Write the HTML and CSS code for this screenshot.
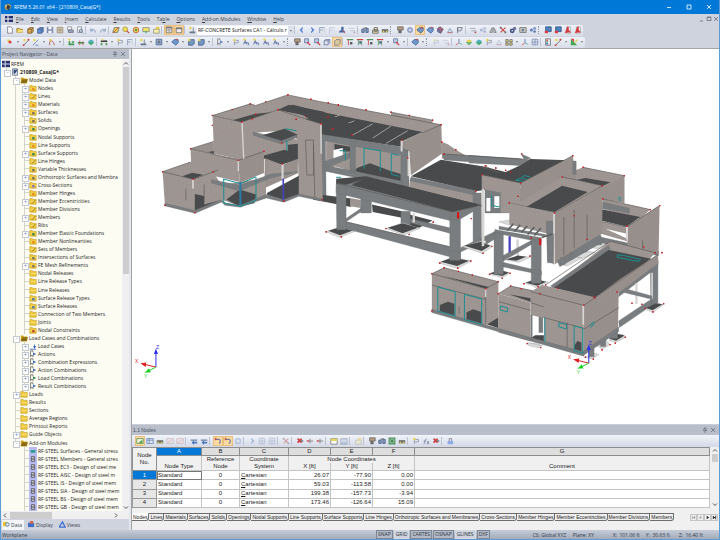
FILE: index.html
```html
<!DOCTYPE html>
<html lang="en">
<head>
<meta charset="utf-8">
<title>RFEM 5.26.01 x64 - [210809_CasaJG*]</title>
<link rel="stylesheet" href="styles.css">
</head>
<body>
<div class="app">
  <header class="titlebar">
    <svg class="logo" viewBox="0 0 10 10"><path fill="#d9a441" d="M1 3l4-2 4 2-1 4-4 2-3-2z"/><path fill="#333b4a" d="M4 2l4 2-2 5-3-2z"/><path fill="#e9eef5" d="M1 2l3 1-1 1z"/></svg>
    <h1>RFEM 5.26.01 x64 - [210809_CasaJG*]</h1>
    <div class="winbtns">
      <button aria-label="Minimize"><svg viewBox="0 0 6 6"><path d="M1 3.500h4"/></svg></button>
      <button aria-label="Maximize"><svg viewBox="0 0 6 6"><path d="M1 1h4v4h-4z"/></svg></button>
      <button aria-label="Close"><svg viewBox="0 0 6 6"><path d="M1 1l4 4M5 1l-4 4"/></svg></button>
    </div>
  </header>
  <nav class="menubar">
    <svg class="flag" viewBox="0 0 8 6"><path fill="#26316e" d="M0 0h8v6H0z"/><path stroke="#fff" d="M0 3h8M3 0v6"/></svg>
    <a href="#"><u>F</u>ile</a><a href="#"><u>E</u>dit</a><a href="#"><u>V</u>iew</a><a href="#"><u>I</u>nsert</a><a href="#"><u>C</u>alculate</a><a href="#"><u>R</u>esults</a><a href="#"><u>T</u>ools</a><a href="#">Ta<u>b</u>le</a><a href="#"><u>O</u>ptions</a><a href="#"><u>A</u>dd-on Modules</a><a href="#"><u>W</u>indow</a><a href="#"><u>H</u>elp</a>
    <div class="mdibtns">
      <button aria-label="Minimize view"><svg viewBox="0 0 6 6"><path d="M1 5h3"/></svg></button>
      <button aria-label="Restore view"><svg viewBox="0 0 6 6"><path d="M1 1.500h4v3h-4zM1 1h4"/></svg></button>
      <button aria-label="Close view"><svg viewBox="0 0 6 6"><path d="M1 1l4 4M5 1l-4 4"/></svg></button>
    </div>
  </nav>
  <div class="toolbars">
    <div class="toolbar" id="bar-main"></div>
    <div class="toolbar" id="bar-model"></div>
  </div>

  <div class="body">
    <aside class="navigator">
      <div class="paneltitle"><h2>Project Navigator - Data</h2><button class="pin" aria-label="Pin navigator"><svg viewBox="0 0 6 6"><path d="M2 1h2v2.500M1 3.500h4M3 4v2M2 1v2"/></svg></button><button aria-label="Close navigator"><svg viewBox="0 0 6 6"><path d="M1 1l4 4M5 1l-4 4"/></svg></button></div>
      <div class="treebox">
        <ul class="tree" id="tree"></ul>
        <div class="vscroll"><svg viewBox="0 0 6 6"><path d="M1 4l2-2 2 2"/></svg><div class="thumb"></div><svg viewBox="0 0 6 6"><path d="M1 2l2 2 2-2"/></svg></div>
      </div>
      <div class="hscroll"><svg viewBox="0 0 6 6"><path d="M4 1l-2 2 2 2"/></svg><div class="thumb"></div><svg viewBox="0 0 6 6"><path d="M2 1l2 2-2 2"/></svg></div>
      <div class="navtabs">
        <button class="on"><svg viewBox="0 0 8 8"><path fill="#f1c232" d="M0 1h5v5H0z"/><circle cx="5" cy="4" r="2" fill="#e4f1fb" stroke="#4c78a8"/></svg>Data</button>
        <button><svg viewBox="0 0 8 8"><path fill="#3f6fc4" d="M0 2h7v5H0z"/><path fill="#d9694d" d="M2 0h4v3H2z"/></svg>Display</button>
        <button><svg viewBox="0 0 8 8"><path fill="none" stroke="#3f6fd0" stroke-width="1.500" d="M0 7L4 1l3 6z"/></svg>Views</button>
      </div>
    </aside>

    <main class="work">
      <svg class="view" viewBox="132 49 587 376" preserveAspectRatio="xMinYMin meet" role="img" aria-label="Structural model">
        <defs>
          <pattern id="brick" width="12" height="7" patternUnits="userSpaceOnUse" patternTransform="skewY(9)"><path fill="#a09894" d="M0 0h12v7H0z"/><path fill="none" stroke="#948b87" d="M0 1h12M0 4.500h8"/></pattern>
          <pattern id="brick2" width="12" height="7" patternUnits="userSpaceOnUse" patternTransform="skewY(-25)"><path fill="#9a928e" d="M0 0h12v7H0z"/><path fill="none" stroke="#8f8682" d="M0 1h12M0 4.500h8"/></pattern>
          <pattern id="slab" width="14" height="10" patternUnits="userSpaceOnUse" patternTransform="skewY(12)"><path fill="#494b4c" d="M0 0h14v10H0z"/><path stroke="#414344" d="M0 2h14M0 7h9"/></pattern>
          <marker id="dot" markerWidth="6" markerHeight="6" refX="3" refY="3" markerUnits="userSpaceOnUse"><rect x=".5" y=".5" width="5" height="5" rx="1" fill="#c3272b"/></marker>
          <marker id="ar" viewBox="0 0 8 6" markerWidth="6" markerHeight="5" refX="3" refY="3" orient="auto"><path d="M0 0l8 3-8 3z" fill="context-stroke"/></marker>
        </defs>

        <!-- main house and long canopy -->
        <g transform="translate(320 85) scale(.3333)">
          <path class="w" d="M215 82L340 106V125L215 98Z"/>
          <path class="w" d="M-95 30L0 50 366 120 368 205 310 145 0 82-90 62Z"/>
          <path class="w" d="M368 172l17 6 25 17 30 17-72 10z"/>
          <path class="d" d="M-125 75L-80 60 0 80 310 142 246 170V186L0 150Z"/>
          <path class="e" d="M-42 101L18 85M-4 117L60 91M36 135L105 108M98 152L160 117M160 160L215 124M200 176L265 138"/>
          <path class="w" d="M20 155L245 198V300L20 245Z"/>
          <path class="d" d="M45 178l47 8v14H45zM112 250l40-14 60 22 33 10v30L108 260z"/>
          <path class="h" d="M42 196l28-6v24l-28 8zM45 245l30 8v22l-28-5z"/>
          <path class="w2" d="M248 172L366 120 368 207 275 272 270 200 248 193Z"/>
          <path class="k" d="M248 170L366 120M215 82L340 106M-95 30L0 50 366 120"/>
          <path class="c" d="M0 148L245 186 266 200V214L0 165ZM5 150H18L20 345H3ZM92 170H108V262H92ZM245 196H266L270 310H244ZM10 232l82-28v16L20 250zM10 240L250 290V308L10 258Z"/>
          <path class="l" d="M244 167h6v33h-6zM265 220h6v54h-6z"/>
          <path class="t" d="M134 190l49 8v62M134 190v62M240 212l-24-5v62l24 6M60 198h18v30M50 278h15"/>
          <path class="w" d="M272 285L475 325V360L270 322Z"/>
          <path class="d" d="M275 275L365 225 490 245 560 262 640 225 690 250 630 300 470 320Z"/>
          <path class="c" d="M275 277L470 318V332L272 288ZM370 208L440 212 600 222V242L375 226Z"/>
          <path class="k" d="M370 208L440 212 600 224M480 245l60 20M500 245l40 20"/>
          <path class="d" d="M158 360l90 20v20l-88-18zM0 330l95 12v25L-20 345zM270 390l70 18-40 22-30-5z"/>
          <path class="w" d="M92 340l32 6v24l-32-5z"/>
          <path class="c" d="M124 340h32v45h-32zM245 380h28v55h-28zM80 402l48-33v10L80 412zM270 402L392 430v16L270 414zM424 490L530 440v14L424 503zM462 325h26v158h-26z"/>
          <path class="p" d="M200 432l50-17 52 17-50 20zM20 442l40-15 46 14-46 18zM430 487l55-17 36 16-31 21zM540 412l40-8 20 10-30 8z"/>
          <path class="d" d="M205 430l45-14 46 14-46 16zM26 439l36-11 38 10-38 14zM436 484l50-12 28 12-26 16z"/>
          <path class="l" d="M487 320h9v162h-7zM280 386h7v28h-7z"/>
          <path class="c" d="M80 412L392 487V517L80 433Z"/><path class="k" d="M80 412L392 487"/>
          <path class="d" d="M50 282L140 275 490 362 400 388 50 300Z"/>
          <path class="c" d="M50 296L80 300 140 282 160 286 96 302 395 378 480 358 488 366 426 402 392 408 50 325ZM50 310H80V436H52ZM392 395H424V527H392Z"/>
          <path class="d" d="M98 299L146 278 486 361 400 382Z"/>
          <path class="k" d="M50 296L400 382 488 362"/>
          <path class="p" d="M358 536l42-18 57 12-41 22z"/><path class="d" d="M364 532l36-13 50 10-36 16z"/>
          <path class="c" d="M392 500h32v28h-32z"/>
          <path class="red" d="M414 383h6v19h-6z"/>
          <path class="n" d="M27 53L57 60 140 75 215 82 270 92 340 106 366 120 368 172 410 195 375 208 499 243 530 250 470 320M5 118L38 134 98 152 248 167 265 220 20 442 66 457 200 432 270 450 342 413 362 536 416 551 455 530 457 402 492 507 518 486"/>
        </g>

        <!-- left wing -->
        <g transform="translate(150 85) scale(.3333)">
          <path class="w" d="M188 92L302 57 318 62 415 30 430 34 425 62 385 75 276 112Z"/>
          <path class="d" d="M248 106L312 88 385 80 276 112ZM385 75L418 60 520 80 620 125 580 150 514 117 468 95Z"/>
          <path class="w2" d="M385 76L450 88 470 95 440 105 430 140 320 140 283 225 276 112Z"/>
          <path class="w" d="M276 112L385 75 470 95V104L514 117 520 347 448 330 444 165 400 135 315 145 318 222 282 225ZM188 92L276 112 282 225 193 208ZM310 142L445 165V235L310 215Z"/>
          <path class="d" d="M325 155L405 132 445 150 395 170ZM415 180l30-3v32l-30-8zM343 212l62-17 40 13v17l-50 15-52-18z"/>
          <path class="c" d="M310 142L396 168 442 150V158L396 178 312 152Z"/>
          <path class="w2" d="M122 192L192 170 193 210 275 222 343 200V265L270 295 266 227ZM345 220L398 240 445 222V266L345 310Z"/>
          <path class="w" d="M38 261L122 232 190 262 215 300 348 280 350 340 270 365 215 345 135 384 45 362ZM122 192L266 227 270 292 125 258ZM350 228L398 240 402 285 350 270Z"/>
          <path class="d" d="M97 275L127 264 160 270 130 284ZM230 345l40-30 50 15-6 26-44 10zM352 325l96-52v60l-45 13-50-14zM135 328l28 6v26l50-14-78 32zM176 202l16-3v9z"/>
          <path class="c" d="M45 356L135 378 215 345 228 356 272 362 350 330 402 345 448 328 520 343V350L448 335 403 353 350 340 272 368 225 362 216 352 136 386 45 364ZM185 285l85 17 95-34 80-7-85 20-92 38-83-24z"/>
          <path class="k" d="M38 261L130 284 205 256M122 192L266 227 343 200M188 92L276 112 385 75 514 117M108 312v35M163 300v55M468 166h24v105h-20zM492 180l4 158M38 261L122 232M122 192L192 170M188 92L302 57 318 62 415 30"/>
          <path class="l" d="M127 284h5v28h-5zM264 227h4v33h-4zM275 112h4l5 110h-4zM396 238h6v45h-6zM512 117h5v90h-4z"/>
          <path class="t" d="M220 283l52 14 46-20M222 283v72l50 10 47-18v-70M406 132l35 6M412 168v30"/>
          <path class="blue" d="M401 282v66"/><path class="t t2" d="M272 292v70"/>
          <path class="n" d="M38 261L45 362 135 384 130 284 190 262 122 192 266 227 343 200 188 122 188 92 276 112 248 74 302 57 318 88 348 50 415 30 484 43 537 54 567 60 308 102 385 75 440 103 468 95 514 117 536 97 550 132 396 174 398 238 403 349 518 345"/>
        </g>

        <!-- right wing -->
        <g transform="translate(470 130) scale(.3333)">
          <path class="c" d="M0 78L160 88 188 90 170 108 0 100Z"/><path class="k" d="M0 78L160 88"/>
          <path class="c" d="M156 72l30 14-20 4zM48 175h110v75H48z"/>
          <path class="h" d="M52 205h12v40H52zM76 200h15v35H76z"/><path class="t" d="M68 196v32l24 4"/>
          <path class="w" d="M95 190h60v60H95z"/>
          <path class="d" d="M90 148L185 88 300 92 310 96 155 160Z"/>
          <path class="t" d="M140 152l14-6 26 4-10 6zM158 142l10-4 16 4"/>
          <path class="w" d="M320 122L343 113 467 138V220L400 205 320 152Z"/>
          <path class="d" d="M325 150L350 145 425 158 400 170Z"/>
          <path class="w2" d="M400 175L467 138V220L400 210Z"/><path class="t" d="M447 208l7-6v14"/>
          <path class="w2" d="M155 160L312 78 314 95 322 96V150L155 250Z"/><path class="c" d="M312 94h10v40h-10z"/>
          <path class="w" d="M38 135L155 160V200L38 178Z"/>
          <path class="c" d="M360 315l115 25 95 25v14l-100-20-110-28z"/>
          <path class="w" d="M402 208L545 240 515 268 400 238Z"/><path class="c" d="M402 218l80 18v14l-80-14z"/>
          <path class="d" d="M352 262L395 238 515 262 475 292Z"/>
          <path class="w2" d="M475 290L573 228 570 372 477 350Z"/><path class="w" d="M317 258L475 292V335L317 290Z"/><path class="h" d="M410 298l65 15v14z"/>
          <path class="k" d="M317 258L475 292 573 228M402 208L545 240M343 113L467 138M522 330v28"/>
          <path class="w" d="M150 220L280 142 402 168 257 250 121 220Z"/>
          <path class="d" d="M172 232L280 168 357 187 257 247Z"/>
          <path class="w2" d="M257 250L402 168 400 312 257 405Z"/><path class="k" d="M285 262v115M316 240v115M355 255v80M121 220L257 250 402 168M38 135L155 160 312 78M280 142L402 168"/>
          <path class="w" d="M121 220L257 250 255 405 235 395V312L121 285Z"/><path class="c" d="M232 275h20v125h-16z"/>
          <path class="p" d="M270 403l40-22 30 5-45 24zM310 378l35-15 35 6-40 18zM355 350l35-10 30 6-36 12z"/>
          <path class="c" d="M265 395l130-80 8 22-130 75zM275 385h14v20h-14zM303 370h12v18h-12zM340 352h14v16h-14zM385 330h14v16h-14z"/>
          <path class="l" d="M38 178h7v172h-7zM142 330h8v50h-8zM253 252h5v60h-5zM472 292h6v38h-6z"/>
          <path class="blue b2" d="M122 320v54"/>
          <path class="p" d="M58 434l30-12 36 9-24 14zM165 462l32-12 40 8-30 15zM110 392l40-12 34 3-34 16z"/>
          <path class="d" d="M112 390l35-12 25 4-30 12zM62 432l30-10 28 7-20 11zM170 460l30-10 32 7-26 12z"/>
          <path class="c" d="M50 330l28-22v20l-28 18zM100 398l118 28v10l-118-24zM103 378l84-45v12l-84 50zM75 310H103V435H75ZM187 330H217V462H187ZM78 300L217 325V338L75 310ZM90 290l140 25v6l-140-22z"/>
          <path class="beam" d="M115 303l18-20M136 306l18-20M157 309l18-20M176 315l20-22M196 318l20-22M218 324l32-10"/>
          <path class="red" d="M211 327h6v20h-6z"/>
          <path class="c" d="M545 398L568 395V537H547ZM425 490l20-5v145h-20zM450 575L550 508V528L452 595ZM450 485L568 395V412L450 502Z"/>
          <path class="l" d="M500 462h7v62h-7zM548 430h5v78h-5z"/><path class="c" d="M460 488l50 12 40 10v-10l-80-22z"/>
          <path class="p" d="M530 540l35-18 20 4-32 24zM420 634l40-20 12 10-30 16zM385 650l26-18 14 14-25 14zM350 684l28-12 12 4-20 14zM175 642l32 12 12-5-20-8z"/>
          <path class="d" d="M532 536l30-14 20 3-30 18zM420 628l28-14 20 5-26 16z"/><path class="c" d="M425 600h22v28h-22zM395 632h16v20h-16zM360 655h16v28h-16z"/>
          <path class="w" d="M190 470L228 490 425 335 560 370 450 490 345 528Z"/>
          <path class="c" d="M245 470L420 348 424 360 255 475Z"/>
          <path class="d" d="M255 475L420 362 450 368 548 388 450 452 378 506Z"/>
          <path class="k" d="M228 468L425 335 560 370"/>
          <path class="t" d="M446 376l18 2 52 12-8 6-62-12z"/>
        </g>

        <!-- front pavilions -->
        <g transform="translate(420 255) scale(.3333)">
          <path class="w" d="M38 58L75 40 238 82V220L200 210Z"/><path class="d" d="M70 64L210 98 200 103Z"/>
          <path class="w" d="M38 58L200 103V212L38 170ZM238 118L275 95 345 110 335 145Z"/>
          <path class="d" d="M270 120L335 132V142ZM205 210L238 190V222ZM335 252L375 225V268ZM62 152l24-10 20 6v35l-44-12zM142 175l20-10 25 8v35l-45-10z"/>
          <path class="w" d="M238 118L335 145V262L238 235Z"/><path class="k" d="M38 58L200 103 238 82M38 92L200 135M120 178v-20M240 142L335 168M200 103v108M38 58L75 40 238 82M238 118L275 95 345 110"/>
          <path class="h" d="M348 188h28v55h-28z"/><path class="c" d="M360 185h12v50h-12z"/>
          <path class="w2" d="M495 153L718 0 720 25 600 115 598 225 495 300Z"/>
          <path class="w" d="M335 112L370 92 525 128 495 153V305L376 265V192L336 182Z"/>
          <path class="k" d="M335 145L376 158M376 190L495 222M445 205v80M335 112L495 153 718 0M495 225L600 160"/>
          <path class="d" d="M466 275l10-15 12 5v30l-22-6z"/>
          <path class="c" d="M38 165L335 250 495 293V306L38 175ZM336 182h4v75h-4zM495 290L600 218V232L495 303Z"/>
          <path class="l" d="M491 153h5v58h-5zM198 103h4v25h-4z"/>
          <path class="t" d="M56 98l52 14v74M56 98v72l52 16M136 120l52 14v76l-52-14zM244 155l22 6v12l-22-6zM378 190v75M420 205l23 6v13l-23-6zM466 215l26 7v75l-26-7zM513 213l12-10v8l-12 10"/>
          <path class="p" d="M325 265l45 10-10 6-30-6z"/>
          <path class="n" d="M38 58L75 40 118 51 160 62 200 103 238 82 238 118 275 95 307 103 363 118 380 92 417 102 495 153 525 128 38 170M325 268L365 280"/>
        </g>
        <g transform="translate(470 130) scale(.3333)">
          <path class="n" d="M38 135L158 72 312 78 155 160 147 200 121 220 257 250 280 142 343 113 400 168 467 138 402 208 475 290 545 240 573 228 525 352 355 330 317 258 62 435 100 447 123 432 165 463 208 472 187 325 183 380 560 370 580 370 585 523 553 548 470 624 440 642 424 646 400 662 350 684 374 690 445 488 380 506M50 108L80 115 110 122 125 128M530 537L520 525 490 522"/>
        </g>

        <g class="axes">
          <g id="axes"><path stroke="#3030e8" marker-end="url(#ar)" d="M156 368v-15"/><path stroke="#e02020" marker-end="url(#ar)" d="M156 368l-12-3"/><path stroke="#20d020" marker-end="url(#ar)" d="M156 368l-8 4"/><text class="ax" x="135" y="364">X</text><text class="ay" x="144" y="379">Y</text><text class="az" x="156" y="350">Z</text></g>
          <use href="#axes" x="434" y="-4"/>
        </g>
      </svg>

      <section class="tablepane">
        <div class="paneltitle"><h2>1.1 Nodes</h2><button class="pin" aria-label="Pin table"><svg viewBox="0 0 6 6"><path d="M2 1h2v2.500M1 3.500h4M3 4v2M2 1v2"/></svg></button><button aria-label="Close table"><svg viewBox="0 0 6 6"><path d="M1 1l4 4M5 1l-4 4"/></svg></button></div>
        <div class="toolbar" id="bar-table"></div>
        <div class="gridbox">
          <table>
            <colgroup><col class="c0"><col class="c1"><col class="c2"><col class="c3"><col class="c4"><col class="c4"><col class="c4"><col></colgroup>
            <thead>
              <tr class="letters"><th rowspan="3" class="nodeno">Node<br>No.</th><th class="sel">A</th><th>B</th><th>C</th><th>D</th><th>E</th><th>F</th><th>G</th></tr>
              <tr class="up"><th></th><th>Reference</th><th>Coordinate</th><th colspan="3">Node Coordinates</th><th></th></tr>
              <tr class="low"><th>Node Type</th><th>Node</th><th>System</th><th>X [ft]</th><th>Y [ft]</th><th>Z [ft]</th><th>Comment</th></tr>
            </thead>
            <tbody>
              <tr><th class="sel">1</th><td class="cur">Standard</td><td class="mid">0</td><td><u>C</u>artesian</td><td class="num">26.07</td><td class="num">-77.90</td><td class="num">0.00</td><td></td></tr>
              <tr><th>2</th><td>Standard</td><td class="mid">0</td><td><u>C</u>artesian</td><td class="num">59.03</td><td class="num">-113.58</td><td class="num">0.00</td><td></td></tr>
              <tr><th>3</th><td>Standard</td><td class="mid">0</td><td><u>C</u>artesian</td><td class="num">199.38</td><td class="num">-157.73</td><td class="num">-3.94</td><td></td></tr>
              <tr><th>4</th><td>Standard</td><td class="mid">0</td><td><u>C</u>artesian</td><td class="num">173.46</td><td class="num">-126.64</td><td class="num">15.09</td><td></td></tr>
            </tbody>
          </table>
          <div class="vscroll"><svg viewBox="0 0 6 6"><path d="M1 4l2-2 2 2"/></svg><div class="thumb"></div><svg viewBox="0 0 6 6"><path d="M1 2l2 2 2-2"/></svg></div>
        </div>
        <div class="sheets">
          <div class="sheettabs" id="sheets"></div>
          <div class="pager">
            <button aria-label="First tab" disabled><svg viewBox="0 0 6 6"><path d="M1 1h1v4H1zM5 1v4L2 3z"/></svg></button>
            <button aria-label="Previous tab" disabled><svg viewBox="0 0 6 6"><path d="M4 1v4L1 3z"/></svg></button>
            <button aria-label="Next tab"><svg viewBox="0 0 6 6"><path d="M2 1v4l3-2z"/></svg></button>
            <button aria-label="Last tab"><svg viewBox="0 0 6 6"><path d="M4 1h1v4H4zM1 1v4l3-2z"/></svg></button>
          </div>
        </div>
      </section>
    </main>
  </div>

  <footer class="status">
    <span class="msg">Workplane</span>
    <div class="modes"><button>SNAP</button><button class="off">GRID</button><button>CARTES</button><button>OSNAP</button><button class="off">GLINES</button><button>DXF</button></div>
    <span class="cs">CS: Global XYZ</span><span class="plane">Plane: XY</span><span class="pos">X:&nbsp; 101.06 ft</span><span class="pos">Y:&nbsp; 30.63 ft</span><span class="pos">Z:&nbsp; 16.40 ft</span>
  </footer>
</div>
<script src="app.js"></script>
</body>
</html>
```
FILE: styles.css
```css
* { box-sizing: border-box; }
body {
  margin: 0;
  font: 5px/8px "Open Sans", "Noto Sans", sans-serif;
  color: #1c1c1c;
}
h1, h2, ul { margin: 0; padding: 0; font: inherit; list-style: none; }
button { font: inherit; color: inherit; border: 0; padding: 0; background: none; }
a { color: inherit; text-decoration: none; }
svg { display: block; }

.app {
  display: flex;
  flex-direction: column;
  height: 100vh;
  background: #cfd3dd;
  border: solid #5b9bd8;
  border-width: 0 1px 1px;
}
.titlebar {
  display: flex;
  align-items: center;
  height: 14px;
  padding-left: 3px;
  background: #0078d7;
  color: #fff;
}
.titlebar .logo { width: 8px; height: 8px; margin-right: 2px; }
.winbtns { display: flex; margin-left: auto; }
.winbtns button { width: 20px; display: flex; justify-content: center; }
.winbtns svg { width: 6px; height: 6px; fill: none; stroke: #fff; stroke-width: .8; }

.menubar {
  display: flex;
  align-items: center;
  gap: 7px;
  height: 10px;
  padding-left: 4px;
  color: #3b3f49;
}
.flag { width: 8px; height: 6px; margin-right: -4px; }
.mdibtns { display: flex; gap: 1px; margin-left: auto; }
.mdibtns svg, .paneltitle svg { width: 6px; height: 6px; fill: none; stroke: #6a6f7b; stroke-width: .8; }

.toolbars { border-bottom: 1px solid #a3a3a3; }
.toolbar { display: flex; align-items: center; height: 12px; }
.toolbars .strip {
  display: flex;
  align-items: center;
  height: 11px;
  padding-left: 4px;
  border-radius: 0 2px 2px 0;
  background: linear-gradient(#eff2f8, #d8dde9);
}
.tool {
  width: 10px;
  height: 10px;
  padding: 1px;
  flex: none;
}
.tool svg { width: 8px; height: 8px; opacity: .85; }
.tool.hot { background: #fcdca0; outline: 1px solid #e8bf80; outline-offset: -1px; }
.tool.dim { opacity: .45; }
.drop {
  width: 6px;
  height: 10px;
  flex: none;
  display: flex;
  align-items: center;
  justify-content: center;
}
.drop::after { content: ""; border: 1px solid transparent; border-top: 2px solid #777; border-bottom: 0; }
.sep { width: 3px; height: 8px; flex: none; border-left: 1px solid #bcc2d0; }
.grip { width: 5px; height: 8px; flex: none; border-left: 1px dotted #8f96a8; }
.combo {
  width: 97px;
  height: 9px;
  flex: none;
  display: flex;
  background: #fff;
}
.combo select {
  flex: 1;
  min-width: 0;
  height: 9px;
  padding: 0 1px;
  border: 0;
  appearance: none;
  background: #fff;
  color: #111;
  font: 5px/9px "Open Sans", sans-serif;
}
.combo .drop { background: #dce1ea; }

.body { display: flex; flex: 1; min-height: 0; background: #e4e7ee; }
.navigator { width: 128px; flex: none; display: flex; flex-direction: column; background: #cfd3dd; }
.paneltitle {
  display: flex;
  align-items: center;
  height: 10px;
  padding: 0 3px 0 1px;
  background: #b8bfcb;
  color: #4a505c;
}
.paneltitle h2 { flex: 1; }
.paneltitle .pin { margin-right: 2px; }

.treebox {
  display: flex;
  flex: 1;
  min-height: 0;
  padding-top: 1px;
  background: #fdfcf3;
}
.tree {
  flex: 1;
  min-width: 0;
  display: grid;
  grid-auto-rows: 1fr;
  padding-left: 1px;
  overflow: hidden;
}
.row {
  display: flex;
  align-items: center;
  min-height: 0;
  white-space: nowrap;
}
.row svg { width: 8px; height: 8px; flex: none; margin-right: 1px; }
.row.bold { font-weight: 700; }
.lead {
  position: relative;
  align-self: stretch;
  width: 9px;
  flex: none;
  background: linear-gradient(#d3d3ca, #d3d3ca) 4px 0 / 1px 100% no-repeat;
}
.lead.blank { background: none; }
.lead.arm { background: linear-gradient(#d3d3ca, #d3d3ca) 4px 0 / 1px 100% no-repeat, linear-gradient(#d3d3ca, #d3d3ca) 4px 50% / 5px 1px no-repeat; }
.lead.box::after {
  content: "+";
  position: absolute;
  left: 2px;
  top: 2px;
  width: 5px;
  height: 5px;
  border: 1px solid #c3c8d1;
  background: #fff;
  color: #5b77b0;
  font: 5px/3px "Liberation Sans", sans-serif;
  text-align: center;
}
.lead.open::after { content: "-"; }
.vscroll {
  width: 7px;
  flex: none;
  display: flex;
  flex-direction: column;
  align-items: center;
  background: #f0f0f0;
}
.vscroll svg, .hscroll svg { width: 6px; height: 7px; fill: none; stroke: #555; }
.vscroll .thumb { width: 6px; height: 207px; background: #cdcdcd; margin-bottom: auto; }
.gridbox .vscroll .thumb { height: 8px; }
.hscroll { display: flex; align-items: center; height: 8px; background: #f0f0f0; padding: 0 10px 0 1px; }
.hscroll .thumb { width: 42px; height: 7px; margin: 0 auto 0 2px; background: #cdcdcd; }
.navtabs { display: flex; gap: 3px; height: 11px; align-items: center; padding-left: 1px; color: #3c4150; }
.navtabs button { display: flex; align-items: center; gap: 1px; height: 10px; padding: 0 2px 0 1px; }
.navtabs .on { background: #f4f5f8; }
.navtabs svg { width: 7px; height: 7px; }

.work { flex: 1; min-width: 0; display: flex; flex-direction: column; margin-left: 2px; border-left: 1px solid #a3a3a3; background: #fff; }
.view { width: 100%; flex: 1; min-height: 0; background: #fff; }
.w { fill: url(#brick); }
.w2 { fill: url(#brick2); }
.d { fill: url(#slab); }
.c { fill: #7a7d7f; stroke: #686c6e; }
.p { fill: #d9dada; stroke: #9b9b9b; }
.l { fill: #d8d6d4; }
.h { fill: #fff; }
.e { fill: none; stroke: #c9c9c9; stroke-width: 2; }
.k { fill: none; stroke: #5d5c5b; stroke-width: 2; }
.beam { fill: none; stroke: #5e6163; stroke-width: 5; }
.t { fill: none; stroke: #1c9093; stroke-width: 3; }
.t2 { stroke: #2b7da8; stroke-width: 6; }
.blue { stroke: #4744b8; stroke-width: 5; }
.b2 { stroke-width: 7; }
.red { fill: #e00d12; }
.n { fill: none; marker: url(#dot); }
.axes path { fill: none; stroke-width: 1; }
.axes text { font: 5px "Liberation Sans", sans-serif; }
.ax { fill: #e02020; }
.ay { fill: #20d020; }
.az { fill: #3030e8; }

.tablepane { background: #f0f0f0; font-family: "Liberation Sans", Arial, sans-serif; border-top: 1px solid #c9ced8; }
.tablepane .toolbar { height: 12px; padding-left: 3px; background: linear-gradient(#f1f4fa, #d3d9e6); }
.tablepane .sep { width: 4px; }
.gridbox { display: flex; padding: 0 1px 0 0; }
.gridbox .vscroll { margin-left: 1px; }
table { flex: 1; border-collapse: collapse; table-layout: fixed; height: 61px; font-size: 6px; line-height: 7px; }
.c0 { width: 24px; }
.c1 { width: 45px; }
.c2 { width: 38px; }
.c3 { width: 49px; }
.c4 { width: 42px; }
th, td { padding: 0 1px; font-weight: 400; border: 1px solid #c4c4c4; white-space: nowrap; }
td { background: #fff; }
.num { text-align: right; }
.mid { text-align: center; }
.nodeno { border-color: #8d8d8d; }
.letters th { background: #dedede; border-color: #8d8d8d; }
.letters .nodeno { background: #f0f0f0; }
thead .up th, thead .low th { background: #f0f0f0; border-top: 0; border-bottom: 0; }
tbody th { background: #e6e6e6; border-color: #9a9a9a; }
.letters .sel, tbody .sel { background: #0078d7; color: #fff; }
.cur { outline: 1px solid #777; outline-offset: -1px; }

.sheets { display: flex; align-items: center; height: 22px; padding-bottom: 4px; font-size: 5px; }
.sheettabs { display: flex; flex: 1; min-width: 0; }
.sheettabs button { height: 8px; padding: 0 1px; border: solid #6d6d6d; border-width: 1px 1px 1px 0; border-radius: 0 0 3px 0; line-height: 6px; white-space: nowrap; }
.sheettabs .on { background: #fff; border-top-color: #fff; }
.pager { display: flex; margin-right: 1px; }
.pager button { width: 7px; height: 7px; border: 1px solid #c5c5c5; }
.pager svg { width: 5px; height: 5px; fill: #222; }
.pager button:disabled svg { fill: #a5a5a5; }

.status {
  display: flex;
  align-items: center;
  height: 9px;
  padding: 0 16px 0 1px;
  background: linear-gradient(#c6ccd8, #a2abba);
  color: #333945;
}
.msg { width: 374px; }
.modes { display: flex; gap: 1px; margin-right: auto; }
.modes button { height: 9px; padding: 0 1px; border: 1px solid #7d8696; line-height: 7px; background: #b3bac7; }
.modes .off { border-color: #d5dae3; background: #cdd2dc; }
.cs { width: 40px; }
.plane { width: 40px; }
.pos { width: 33px; }
.pos:last-child { width: auto; }
```
FILE: app.js
```js
// Glyphs are drawn on a 10 x 10 grid.
const G = {
  page: '<path fill="#fff" stroke="#667" d="M2 1h4l2 2v6H2z"/>',
  folder: '<path fill="#e8b92e" stroke="#94751a" d="M1 3h3l1 1h3v4H1z"/><path fill="#f8dd72" d="M3 5h6L8 8H1z"/>',
  boxY: '<path fill="#d39a35" stroke="#744f16" d="M2 4l3-2h4v5L7 9H2z"/><path stroke="#744f16" fill="none" d="M2 4h5v5M7 4l2-2"/>',
  boxB: '<path fill="#4f83cf" stroke="#27457c" d="M2 4l3-2h4v5L7 9H2z"/><path stroke="#27457c" fill="none" d="M2 4h5v5M7 4l2-2"/>',
  save: '<path fill="#6f7ba8" d="M1 1h8v8H1z"/><path fill="#fff" d="M3 1h4v3H3zM3 6h4v3H3z"/>',
  tan: '<path fill="#d9c4a0" stroke="#8b7a60" d="M1.500 1.500h7v7h-7z"/><path stroke="#776" d="M3 4h4M3 6h4"/>',
  print: '<path fill="#fff" stroke="#778" d="M2 1h5v4H2z"/><path fill="#8fa0bf" stroke="#556" d="M3 5h6v3H3z"/>',
  find: '<path fill="#fff" stroke="#778" d="M2 1h5v7H2z"/><circle cx="6" cy="6" r="2" fill="#bcd" stroke="#456"/><path stroke="#456" d="M8 8l1.500 1.500"/>',
  undo: '<path fill="none" stroke="#8fa3c8" stroke-width="1.500" d="M2 3v3h3M2 6c2-3 6-2 6 2"/>',
  redo: '<path fill="none" stroke="#8fa3c8" stroke-width="1.500" d="M8 3v3H5M8 6c-2-3-6-2-6 2"/>',
  plane: '<path fill="#f4d634" stroke="#555" d="M1 8l2-6h6L7 8z"/><path stroke="#c22" d="M1 9l7-7"/>',
  zoomY: '<circle cx="4" cy="4" r="3" fill="#f6dc3e" stroke="#998a20"/><path stroke="#c22" stroke-width="1.500" d="M6 6l3 3"/>',
  gearY: '<circle cx="5" cy="5" r="3.500" fill="#f0cf35" stroke="#b4441f"/><circle cx="5" cy="5" r="1.500" fill="#3f8a3f"/>',
  noteY: '<path fill="#f7e44c" stroke="#777" d="M1 2h8v5H1z"/><path stroke="#2a6" stroke-width="1.500" d="M5 6v3"/>',
  cardY: '<path fill="#fdf09a" stroke="#887" d="M2 4h7v5H2z"/><path fill="#e8c020" d="M5 1h4v3H5z"/>',
  table: '<path fill="#fff" stroke="#555" d="M1.500 1.500h7v7h-7z"/><path fill="#667" d="M1 1h8v2H1z"/><path stroke="#889" d="M4 3v5M6 3v5M2 5h6"/>',
  wind: '<path fill="#eef" stroke="#555" d="M1.500 2.500h7v6h-7z"/><path fill="#667" d="M1 2h8v2H1z"/>',
  load: '<circle cx="3" cy="2.500" r="1.500" fill="#e9d02c"/><path fill="#567" d="M2 7h7v2H2zM6 2h1v5H6z"/>',
  left: '<path fill="#3b6fc6" d="M2 5l4-4v2.500L4.500 5 6 6.500V9z"/>',
  right: '<path fill="#3b6fc6" d="M8 5L4 1v2.500L5.500 5 4 6.500V9z"/>',
  frame: '<path fill="none" stroke="#7488b0" d="M2 9V2h6M2 5h4"/><path stroke="#bcc" d="M8 2v6"/>',
  ppl: '<path fill="#2e4f95" d="M4 1h3v4H4z"/><path fill="#2e4f95" d="M1 8c1-4 7-4 8 0z"/><path stroke="#c22" d="M6 6l3 3"/>',
  dots: '<path fill="none" stroke="#8b93a5" d="M1 3h7M3 6h6"/><path fill="#a33" d="M7 7h2v2H7z"/>',
  glass: '<path fill="#7b92bb" stroke="#24406f" d="M1 4h3v4H1zM6 3h3v5H6z"/><path stroke="#222" d="M3 3l4-1"/>',
  calc: '<path fill="#f5e6a6" stroke="#444" d="M2 5h7v4H2zM4 2h4v3H4z"/><path fill="#333" d="M3 6h5v1H3z"/>',
  bars: '<path fill="#555" d="M1 4h8v4H1z"/><path fill="#e6cf4a" d="M2 6h2v2H2zM6 6h2v2H6z"/>',
  gear: '<circle cx="5" cy="5" r="3" fill="#a9b7dd" stroke="#5b6ba0"/><circle cx="5" cy="5" r="1" fill="#fff"/>',
  bricks: '<path fill="#b28b66" stroke="#555" d="M2 1h7v4H2z"/><path fill="#555" d="M3 5h4v4H3z"/>',
  solid: '<path fill="#5a8acb" stroke="#2f5288" d="M1 5l3-3h5v4L6 9z"/><path fill="#c33" d="M6 1h2v2H6z"/>',
  solidR: '<path fill="#c9403e" stroke="#2c437a" d="M2 3l3-2 4 3-3 5-4-2z"/><path fill="#3d63b4" d="M3 4h3v3H3z"/>',
  supp: '<path fill="none" stroke="#667fa8" d="M2 8h6L5 3z"/><path fill="#c55" d="M2 8h6v1H2z"/>',
  flag: '<path fill="#dfe6f3" stroke="#556" d="M2 2h6l-2 4H2z"/><path stroke="#556" d="M2 2v7"/>',
  mirror: '<path fill="#ccc" stroke="#666" d="M1 8l3-6v6zM9 8L6 2v6z"/>',
  cross: '<path stroke="#c8362f" stroke-width="1.500" d="M2 2l6 6M8 2L2 8"/><path fill="#555" d="M1 1h2v2H1zM7 7h2v2H7z"/>',
  ball: '<circle cx="4" cy="6" r="3" fill="#24336e"/><circle cx="7" cy="3" r="2" fill="#555f90"/><circle cx="4" cy="6" r="1" fill="#fff"/>',
  cam: '<path fill="#d8d2b6" stroke="#555" d="M1 2h8v6H1z"/><circle cx="5" cy="5" r="2" fill="#56719f"/>',
  fan: '<circle cx="3" cy="5" r="2" fill="#4f6fae"/><circle cx="7" cy="3" r="2" fill="#7d95c6"/><circle cx="7" cy="7" r="1.500" fill="#3d568f"/>',
  screen: '<path fill="#2f72b8" stroke="#1e3d6c" d="M2 1h7v6H2z"/><path fill="#d22" d="M1 6h4v3H1z"/>',
  pdf: '<path fill="#fff" stroke="#999" d="M3 1h5v8H3z"/><path fill="#cf1d1d" d="M1 9L4 1h2v4l3 3H5z"/>',
  node: '<circle cx="3" cy="3" r="1.500" fill="#ead22d"/><circle cx="5" cy="5" r="2" fill="#d62a20"/>',
  line: '<circle cx="3" cy="2.500" r="1.500" fill="#ead22d"/><path stroke="#444" d="M2 9l7-7"/><path fill="#c22" d="M1 8h2v2H1zM7 1h2v2H7z"/>',
  lineB: '<circle cx="3" cy="2.500" r="1.500" fill="#ead22d"/><path stroke="#4a76c4" fill="none" d="M1 9l7-7M4 9h4"/>',
  arc: '<circle cx="3" cy="2.500" r="1.500" fill="#ead22d"/><path stroke="#a33" fill="none" d="M2 9V5c3-3 5 0 6 4"/>',
  green: '<circle cx="3" cy="2" r="1.500" fill="#ead22d"/><path stroke="#238a38" stroke-width="2" fill="none" d="M3 4v4h6M6 5h3"/>',
  rig: '<path stroke="#238a38" stroke-width="2" d="M1 6h8"/><path fill="#b33" d="M3 3h1v6H3zM7 4h1v5H7z"/>',
  surf: '<path fill="#27a05a" d="M1 6l4-3 4 3-4 3z"/><path fill="#3aa6b8" d="M1 4l4-2 4 2-4 2z"/>',
  mem: '<path stroke="#222" stroke-width="2" d="M1 4h8"/><path fill="#3c8f3c" d="M1 6h2v3H1zM7 6h2v3H7z"/><path fill="#ead22d" d="M2 1h2v2H2z"/>',
  hinge: '<path fill="none" stroke="#7d879b" d="M3 9V3h5v3H3"/><circle cx="3" cy="2.500" r="1.500" fill="#ead22d"/>',
  cube: '<path fill="#6189bd" stroke="#304a73" d="M2 4l2-2h5v5L7 9H2z"/><circle cx="3" cy="2.500" r="1.500" fill="#ead22d"/>',
  hole: '<path fill="#88a1c9" stroke="#354e7c" d="M1.500 1.500h7v7h-7z"/><path fill="#fff" stroke="#333" d="M4 4h2v2H4z"/>',
  combi: '<path fill="none" stroke="#666" d="M2 1h3v2M2 7h3v2M2 1v8"/><path fill="#3a6ac0" d="M5 3l4 2-4 2z"/>',
  num: '<path fill="none" stroke="#374f8f" d="M2 8l2-5 2 5M3 6h5v3"/><circle cx="3" cy="2" r="1.500" fill="#ead22d"/>',
  lens: '<path fill="#b5c8e6" stroke="#4b5f8d" d="M2 1h5v5H2z"/><path stroke="#c22" stroke-width="1.500" d="M5 5l4 4"/>',
  wire: '<path fill="none" stroke="#4b5f8d" d="M1.500 3.500h5v5h-5zM3 2h5.500v5M1.500 3.500L3 2M6.500 3.500l2-1.500"/>',
  gold: '<path fill="#d8c39b" stroke="#55678f" d="M2 4l2-2h5v5L7 9H2z"/>',
  axR: '<path stroke="#c22" stroke-width="1.500" d="M1 2h8"/><path stroke="#2f8a3a" d="M3 2v7M7 4v5"/><path fill="#357" d="M4 4h3v3H4z"/>',
  axG: '<path stroke="#2f8a3a" stroke-width="1.500" d="M1 2h8"/><path stroke="#c22" d="M3 2v7"/><path fill="#444" d="M5 5h3v3H5z"/>',
  xyz: '<path stroke="#3858b5" d="M5 1v5"/><path stroke="#c33" d="M5 6L1 9"/><path stroke="#3a9" d="M5 6l4 2"/>',
  rain: '<path fill="#3fa65c" d="M1 5l4 4 4-4z"/><path fill="#e5cd30" d="M1 4l4-2 4 2-4 2z"/>',
  legend: '<path fill="#eee" stroke="#555" d="M2 1h6v8H2z"/><path fill="#d33" d="M3 2h2v2H3z"/><path fill="#3a6" d="M3 4h2v2H3z"/><path fill="#36c" d="M3 6h2v2H3z"/>',
  grid4: '<path fill="#ead85a" stroke="#555" d="M1 2h3v3H1zM6 2h3v3H6zM1 6h3v3H1zM6 6h3v3H6z"/>',
  gridB: '<path fill="#dbe3f4" stroke="#6f7fa8" d="M1.500 1.500h7v7h-7zM5 1v8M1 5h8"/>',
  tri: '<path fill="#2a9d3a" d="M1 1v8h8z"/><path fill="#d22" d="M1 1l4 4V1z"/><path fill="#e8c92a" d="M4 7l5-6v3z"/>',
  tbl: '<path fill="#e4edfa" stroke="#5573a3" d="M1 2h8v6H1z"/><path stroke="#5573a3" d="M1 4h8M4 2v6"/>',
  tblG: '<path fill="#f4fff0" stroke="#3a7f3a" d="M1 2h8v6H1z"/><path fill="#4ba047" d="M3 7l5-4v5z"/>',
  tblR: '<path fill="#f6e3e3" stroke="#a77" d="M1 2h8v6H1z"/><path stroke="#c66" d="M2 7l6-4"/>',
  tblY: '<path fill="#fff" stroke="#666" d="M1 2h8v7H1z"/><path fill="#e7d44a" d="M1 2h8v3H1z"/>',
  tblB: '<path fill="#7f9fd8" stroke="#556" d="M1 2h8v7H1z"/><path stroke="#fff" d="M1 5h8"/>',
  swap: '<path fill="#7a88a4" d="M1 3h8v2H1z"/><path fill="#2f62b8" d="M2 7l3-3v2h4v2H5v2z"/>',
  turn: '<path fill="none" stroke="#5b6da0" stroke-width="1.500" d="M2 3h4c3 0 2 5 0 5"/><path fill="#c33" d="M1 1h2v3H1z"/>',
  ring: '<circle cx="5" cy="5" r="3" fill="none" stroke="#7a94c8" stroke-width="2"/>',
  delx: '<path stroke="#c22" stroke-width="2" d="M2 2l5 5M7 2L2 7"/><path fill="#567" d="M6 4h3v2H6z"/>',
  row: '<path fill="#c44" d="M1 4h3v2H1z"/><path stroke="#666" d="M4 5h5M5 2v6"/>',
  xls: '<path fill="#fff" stroke="#287c3c" stroke-width="1.500" d="M1.500 1.500h7v7h-7z"/><path stroke="#287c3c" stroke-width="2" d="M3 3l4 4M7 3L3 7"/>',
  fx: '<path fill="none" stroke="#65708a" d="M2 9c2 0 1-7 4-7M2 5h3M6 5l3 4M9 5L6 9"/>',
  lock: '<path fill="#7fa3e6" d="M2 5h7v4H2z"/><path fill="none" stroke="#667" d="M4 5V2h3v3"/>'
};

const svg = body => `<svg viewBox="0 0 10 10">${body}</svg>`;

// "name" is a tool, "name!" a pressed one, "name-" a disabled one.
// "|" separates, ":" starts a new group, "v" opens a menu.
const build = spec => spec.split(' ').map(t => {
  if (t === '|') return '<span class="sep"></span>';
  if (t === ':') return '<span class="grip"></span>';
  if (t === 'v') return '<span class="drop"></span>';
  if (t === 'combo') return '<div class="combo"><select aria-label="Load case"><option>RF-CONCRETE Surfaces CA1 - Cálculo r</option></select><span class="drop"></span></div>';
  const name = t.replace(/[!-]$/, '');
  const state = t.endsWith('!') ? ' hot' : t.endsWith('-') ? ' dim' : '';
  return `<button class="tool${state}" aria-label="${name}">${svg(G[name])}</button>`;
}).join('');

const fill = (id, html) => { document.getElementById(id).innerHTML = html; };

fill('bar-main', `<div class="strip">${build('page folder boxY boxB save tan print find | undo redo | plane zoomY gearY noteY cardY | table! wind! | load combo | left right frame frame- ppl dots- | glass calc bars : bricks gear solid! solid solidR supp flag | dots fan- mirror cross ball cam fan : screen screen pdf pdf')}</div>`);
fill('bar-model', `<div class="strip">${build('node v line lineB v arc v | green rig surf | mem v hinge frame | load v hole v solid v cube cube v | combi v hinge num num num num v : bricks lens lens wire gold! | axG axR axG axR v lens v | solid v : hinge- dots- | xyz rain surf hinge supp- grid4 v xyz gridB | legend line v tri v')}</div>`);
fill('bar-table', build('tblG! tbl bars tblR- tblR- | swap swap | turn! turn! ring- | right- gridB- gridB- | cross- | delx row row | tblY tblB- | cardY- | bricks glass xls bars | hinge fx delx | lock'));

const FOLDER = '<path fill="#f1cb3c" stroke="#c49a22" stroke-width=".8" d="M1 2h3l1 1h4v6H1z"/><path fill="#fbe382" d="M2 5h7v1H2z"/>';
const mark = c => FOLDER + `<path fill="${c}" d="M4 5h3v3H4z"/>`;
const ICON = {
  f: FOLDER,
  F: '<path fill="#d2a31d" d="M1 2h3l1 1h4v6H1z"/><path fill="#8a6d12" d="M1 8l2-4h7l-2 5H1z"/>',
  o: mark('#e48a1a'), g: mark('#3b8a4a'), b: mark('#4a78b8'), s: mark('#77715a'), r: mark('#c2452d'), p: mark('#8a6bd0'),
  y: FOLDER + '<path stroke="#7a5a10" d="M4 8l4-4"/>',
  R: '<path fill="#26316e" d="M0 1h10v8H0z"/><path stroke="#fff" d="M0 5h10M4 1v8"/>',
  D: '<path fill="#dfe7f2" stroke="#5a6c86" d="M2 1h6v8H2z"/><path stroke="#36507c" stroke-width="1.500" d="M4 7V3h3L4 7"/>',
  L: '<path stroke="#3461b8" fill="none" d="M1 9h8M7 3v5"/><path fill="#3461b8" d="M5 5h4L7 8z"/>',
  c: G.combi,
  C: '<path fill="none" stroke="#666" d="M2 1h3v2M2 7h3v2M2 1v8"/><path fill="#1f8a3a" d="M5 3l4 2-4 2z"/>',
  m: '<path fill="#b9bbf0" d="M0 0h10v10H0z"/><path fill="#e9ecff" stroke="#555" d="M3 2h4v6H3z"/><path stroke="#444" d="M3 4h4M3 6h4"/>',
  M: '<path fill="#b9bbf0" d="M0 0h10v10H0z"/><path fill="#1d9a8a" d="M2 4h6v3H2z"/>'
};

// Each line: depth, box state (+ closed, = open, . leaf), icon, label.
const ROWS = `0.RRFEM
1=D210809_CasaJG*
2=FModel Data
3+oNodes
3+yLines
3+oMaterials
3+sSurfaces
3.sSolids
3+gOpenings
3.gNodal Supports
3.oLine Supports
3+gSurface Supports
3.yLine Hinges
3.sVariable Thicknesses
3+sOrthotropic Surfaces and Membra
3+pCross-Sections
3.oMember Hinges
3+yMember Eccentricities
3.yMember Divisions
3+yMembers
3.yRibs
3+gMember Elastic Foundations
3.oMember Nonlinearities
3.ySets of Members
3.sIntersections of Surfaces
3+sFE Mesh Refinements
3.fNodal Releases
3.fLine Release Types
3.fLine Releases
3.bSurface Release Types
3.bSurface Releases
3.fConnection of Two Members
3.fJoints
3.rNodal Constraints
2=FLoad Cases and Combinations
3+LLoad Cases
3+cActions
3+cCombination Expressions
3+cAction Combinations
3+CLoad Combinations
3+cResult Combinations
2+fLoads
2.fResults
2.fSections
2.fAverage Regions
2.fPrintout Reports
2+fGuide Objects
2=FAdd-on Modules
3.MRF-STEEL Surfaces - General stress
3.mRF-STEEL Members - General stres
3.mRF-STEEL EC3 - Design of steel me
3.mRF-STEEL AISC - Design of steel m
3.mRF-STEEL IS - Design of steel mem
3.mRF-STEEL SIA - Design of steel mem
3.mRF-STEEL BS - Design of steel mem
3.mRF-STEEL GB - Design of steel mem`.split('\n');

fill('tree', ROWS.map((r, i) => {
  const depth = +r[0], box = r[1];
  let lead = '';
  for (let d = 1; d <= depth; d++) {
    if (d < depth) {
      const through = d === 2 && i < 47;
      lead += `<span class="lead${through ? '' : ' blank'}"></span>`;
    } else {
      lead += `<span class="lead arm${box === '+' ? ' box' : box === '=' ? ' box open' : ''}"></span>`;
    }
  }
  return `<li class="row${depth === 1 ? ' bold' : ''}">${lead}${svg(ICON[r[2]])}<span>${r.slice(3)}</span></li>`;
}).join(''));

fill('sheets', ['Nodes', 'Lines', 'Materials', 'Surfaces', 'Solids', 'Openings', 'Nodal Supports', 'Line Supports', 'Surface Supports', 'Line Hinges', 'Orthotropic Surfaces and Membranes', 'Cross-Sections', 'Member Hinges', 'Member Eccentricities', 'Member Divisions', 'Members']
  .map((t, i) => `<button${i ? '' : ' class="on"'}>${t}</button>`).join(''));
```
